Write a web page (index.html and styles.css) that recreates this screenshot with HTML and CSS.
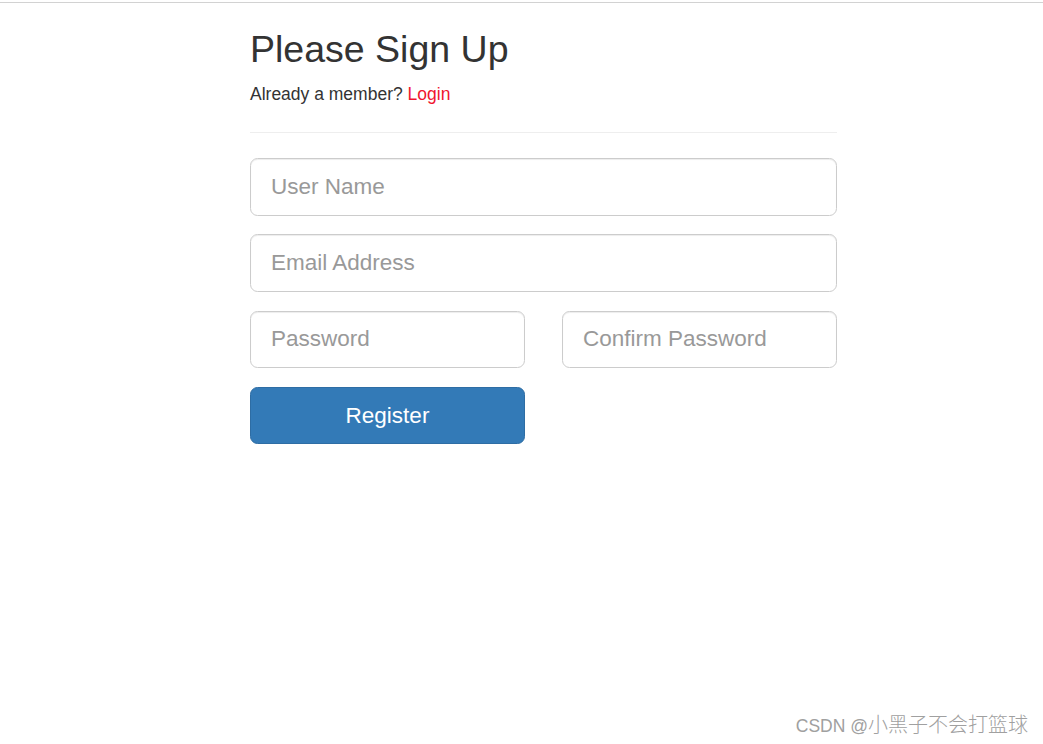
FILE: index.html
```html
<!DOCTYPE html>
<html lang="en">
<head>
<meta charset="utf-8">
<title>Please Sign Up</title>
<link rel="stylesheet" href="styles.css">
</head>
<body>
<div class="topline"></div>
<main class="wrap">
  <h2 class="title">Please Sign Up</h2>
  <p class="member">Already a member? <a href="#" class="login">Login</a></p>
  <hr class="divider">
  <form class="form">
    <div class="group"><input class="field" type="text" placeholder="User Name"></div>
    <div class="group"><input class="field" type="email" placeholder="Email Address"></div>
    <div class="row">
      <div class="group"><input class="field" type="password" placeholder="Password"></div>
      <div class="group"><input class="field" type="password" placeholder="Confirm Password"></div>
    </div>
    <div class="row">
      <button type="button" class="btn">Register</button>
      <div></div>
    </div>
  </form>
</main>
<div class="watermark"><span class="wm-latin">CSDN @</span><span class="wm-cjk">小黑子不会打篮球</span></div>
</body>
</html>
```

FILE: styles.css
```css
* { box-sizing: border-box; }
html, body { margin: 0; padding: 0; background: #fff; }
body {
  font-family: "Liberation Sans", Arial, sans-serif;
  font-size: 17.5px;
  line-height: 1.42857;
  color: #333;
  position: relative;
  min-height: 744px;
}
.topline {
  margin-top: 2px;
  height: 1px;
  background: #d2d2d2;
}
.wrap {
  margin-left: 250px;
  width: 587px;
  padding-top: 25.5px;
}
.title {
  margin: 0 0 12.5px;
  font-size: 37.5px;
  font-weight: 400;
  line-height: 1.1;
  color: #333;
}
.member {
  margin: 0;
}
.login {
  color: #f0142e;
  text-decoration: none;
}
.divider {
  margin: 25px 0;
  border: 0;
  border-top: 1.25px solid #eee;
  height: 0;
}
.form { margin: 0; }
.group { margin-bottom: 18.75px; }
.row {
  display: grid;
  grid-template-columns: 1fr 1fr;
  column-gap: 37px;
}
.field {
  display: block;
  width: 100%;
  height: 57.5px;
  padding: 12.5px 20px;
  font-family: "Liberation Sans", Arial, sans-serif;
  font-size: 22.5px;
  line-height: 1.3333;
  color: #555;
  background: #fff;
  border: 1px solid #ccc;
  border-radius: 7.5px;
  box-shadow: inset 0 1px 1px rgba(0,0,0,.075);
  outline: none;
}
.field::placeholder { color: #999; }
.btn {
  display: block;
  width: 100%;
  height: 57.5px;
  padding: 12.5px 20px;
  font-family: "Liberation Sans", Arial, sans-serif;
  font-size: 22.5px;
  line-height: 1.3333;
  color: #fff;
  background: #337ab7;
  border: 1px solid #2e6da4;
  border-radius: 7.5px;
  cursor: pointer;
}
.watermark {
  position: absolute;
  right: 15px;
  bottom: 9px;
  color: #a0a0a0;
  white-space: nowrap;
  text-shadow: 0 0 1px #fff;
  line-height: 1;
}
.wm-latin {
  font-family: "Liberation Sans", Arial, sans-serif;
  font-size: 17.5px;
}
.wm-cjk {
  font-family: "Noto Sans CJK SC", sans-serif;
  font-size: 20px;
  font-weight: 300;
}
```
